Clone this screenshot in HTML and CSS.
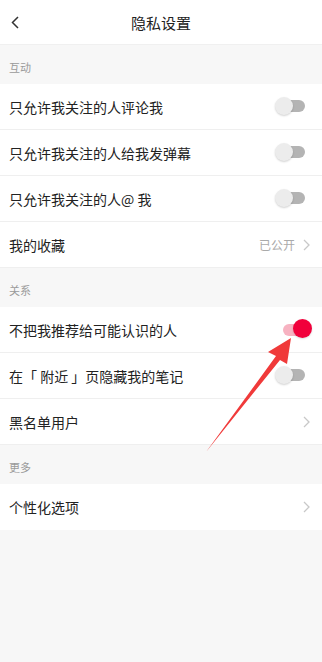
FILE: index.html
```html
<!DOCTYPE html>
<html lang="zh">
<head>
<meta charset="utf-8">
<link rel="stylesheet" href="styles.css">
</head>
<body>
<div class="page">
  <header class="top">
    <svg class="back" width="8" height="13" viewBox="0 0 8 13"><polyline points="7,1 1.5,6.5 7,12" fill="none" stroke="#333" stroke-width="1.5"/></svg>
    <div class="title">隐私设置</div>
  </header>

  <div class="sec">互动</div>
  <div class="row"><span>只允许我关注的人评论我</span><span class="tg"><i class="track"></i><i class="knob"></i></span></div>
  <div class="row"><span>只允许我关注的人给我发弹幕</span><span class="tg"><i class="track"></i><i class="knob"></i></span></div>
  <div class="row"><span>只允许我关注的人@ 我</span><span class="tg"><i class="track"></i><i class="knob"></i></span></div>
  <div class="row link"><span>我的收藏</span><span class="right"><span class="val">已公开</span><svg class="chev" width="7" height="12" viewBox="0 0 7 12"><polyline points="1,1 6,6 1,11" fill="none" stroke="#c8c8c8" stroke-width="1.3"/></svg></span></div>

  <div class="sec">关系</div>
  <div class="row"><span>不把我推荐给可能认识的人</span><span class="tg on"><i class="track"></i><i class="knob"></i></span></div>
  <div class="row"><span>在「 附近 」页隐藏我的笔记</span><span class="tg"><i class="track"></i><i class="knob"></i></span></div>
  <div class="row link"><span>黑名单用户</span><span class="right"><svg class="chev" width="7" height="12" viewBox="0 0 7 12"><polyline points="1,1 6,6 1,11" fill="none" stroke="#c8c8c8" stroke-width="1.3"/></svg></span></div>

  <div class="sec">更多</div>
  <div class="row link"><span>个性化选项</span><span class="right"><svg class="chev" width="7" height="12" viewBox="0 0 7 12"><polyline points="1,1 6,6 1,11" fill="none" stroke="#c8c8c8" stroke-width="1.3"/></svg></span></div>

  <svg class="arrow" width="322" height="662" viewBox="0 0 322 662">
    <polygon points="206,452 276,356 268,352 291,338 287,364 280,360" fill="#f03a3a"/>
  </svg>
</div>
</body>
</html>
```
FILE: styles.css
```css
* { box-sizing: border-box; margin: 0; padding: 0; }
html, body { width: 322px; height: 662px; background: #f7f7f7; }
body { font-family: "Noto Sans CJK SC", "Noto Sans", sans-serif; color: #222; overflow: hidden; }
.page { position: relative; width: 322px; height: 662px; background: #f7f7f7; }
.top { height: 45px; background: #fff; display: flex; align-items: center; justify-content: center; position: relative; border-bottom: 1px solid #f0f0f0; }
.back { position: absolute; left: 11px; top: 16px; }
.title { font-size: 15px; color: #222; }
.sec { height: 39px; display: flex; align-items: flex-end; padding: 0 9px 9px; font-size: 11px; color: #9a9a9a; }
.row { height: 46px; background: #fff; display: flex; align-items: center; justify-content: space-between; padding: 0 10px 0 9px; font-size: 14px; border-bottom: 1px solid #efefef; }
.row:last-of-type { border-bottom: 0; }
.row.link { padding-right: 12px; }
.right { display: flex; align-items: center; gap: 8px; }
.val { font-size: 12px; color: #aaa; }
.chev { display: block; }
.tg { position: relative; width: 37px; height: 19px; display: block; }
.tg .track { position: absolute; left: 5px; top: 3px; width: 25px; height: 12px; border-radius: 6px; background: #b4b4b4; }
.tg .knob { position: absolute; left: 0; top: 0; width: 18px; height: 18px; border-radius: 50%; background: #ececec; box-shadow: 0 1px 2px rgba(0,0,0,0.18); }
.tg.on .track { left: 8px; top: 4px; width: 20px; background: #f7b2c1; }
.tg.on .knob { left: 18px; top: -1px; width: 19px; height: 19px; background: #f1003b; box-shadow: 0 1px 2px rgba(0,0,0,0.15); }
.arrow { position: absolute; left: 0; top: 0; pointer-events: none; }
```
